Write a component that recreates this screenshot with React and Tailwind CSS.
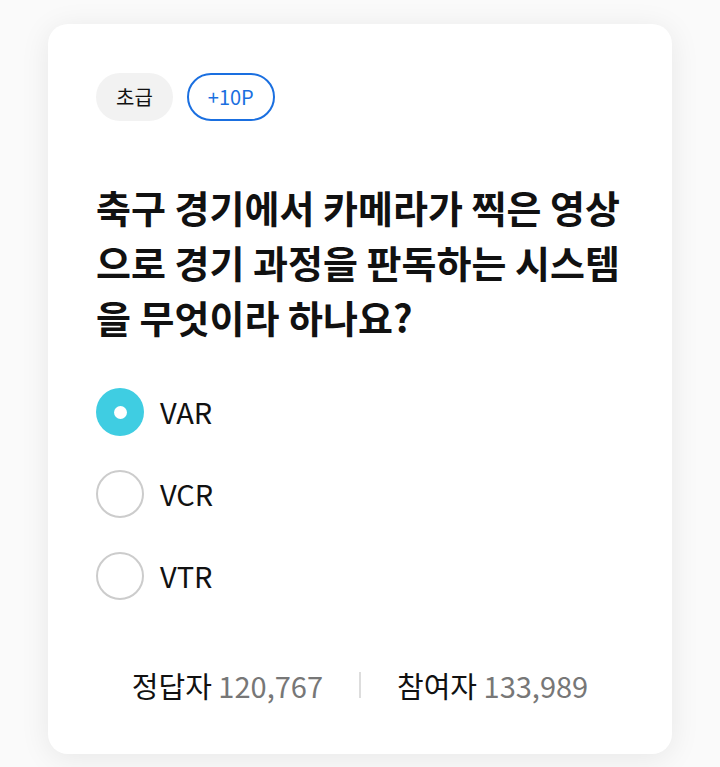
export default function App() {
  const options = ["VAR", "VCR", "VTR"];
  const selected = 0;

  return (
    <div
      className="min-h-[767px] w-[720px] bg-[#fafafa] pt-6 px-12"
      style={{ fontFamily: '"Noto Sans CJK KR", "Noto Sans", sans-serif' }}
    >
      <div className="bg-white rounded-[20px] shadow-[0_4px_30px_rgba(0,0,0,0.08)] px-12 pt-[49px] pb-[49px]">
        {/* badges */}
        <div className="flex items-center gap-[14px]">
          <span className="h-12 px-5 flex items-center rounded-full bg-[#f2f2f2] text-[20px] text-[#111]">
            초급
          </span>
          <span className="h-12 px-[19px] flex items-center rounded-full border-2 border-[#1a6fe0] text-[20px] text-[#1a6fe0]">
            +10P
          </span>
        </div>

        <h2 className="mt-[58px] text-[38px] leading-[55px] font-bold text-[#111]">
          축구 경기에서 카메라가 찍은 영상으로 경기 과정을 판독하는 시스템을 무엇이라 하나요?
        </h2>

        <ul className="mt-[44px] flex flex-col gap-[34px]">
          {options.map((opt, i) => (
            <li key={opt} className="flex items-center gap-4 h-12">
              {i === selected ? (
                <span className="w-12 h-12 rounded-full bg-[#3fcde2] flex items-center justify-center">
                  <span className="w-[13px] h-[13px] rounded-full bg-white" />
                </span>
              ) : (
                <span className="w-12 h-12 rounded-full border-2 border-[#cccccc]" />
              )}
              <span className="text-[29px] text-[#111]">{opt}</span>
            </li>
          ))}
        </ul>

        {/* 정답자 / 참여자 */}
        <div className="mt-[65px] flex items-center justify-center text-[29px] leading-[40px]">
          <span className="text-[#111]">
            정답자 <span className="text-[#777]">120,767</span>
          </span>
          <span className="mx-9 w-[2px] h-[26px] bg-[#dddddd]" />
          <span className="text-[#111]">
            참여자 <span className="text-[#777]">133,989</span>
          </span>
        </div>
      </div>
    </div>
  );
}
